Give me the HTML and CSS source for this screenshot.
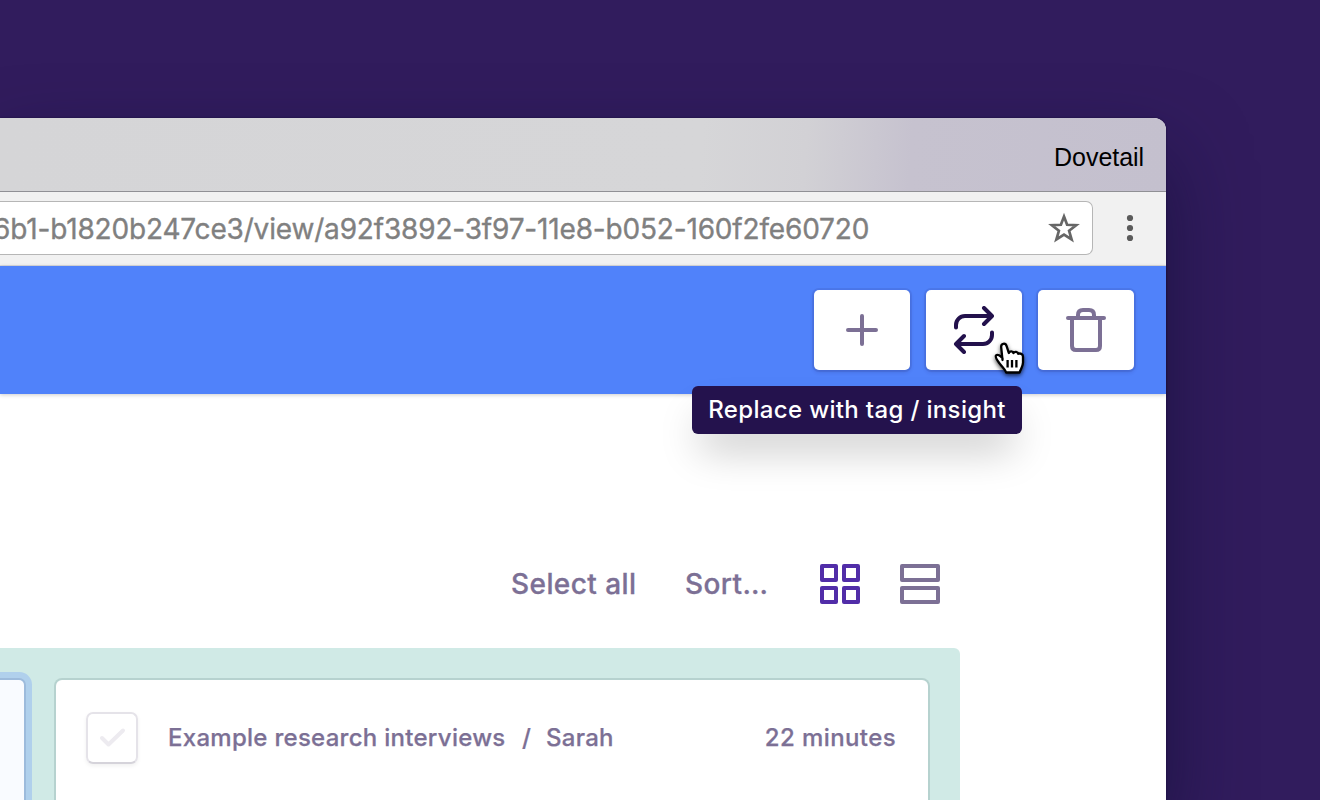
FILE: index.html
```
<!DOCTYPE html>
<html lang="en">
<head>
<meta charset="utf-8">
<title>Dovetail</title>
<link rel="stylesheet" href="styles.css">
</head>
<body>
<main class="window">
  <header class="titlebar"><span class="profile">Dovetail</span></header>
  <div class="toolbar">
    <div class="address">
      <span class="url">6b1-b1820b247ce3/view/a92f3892-3f97-11e8-b052-160f2fe60720</span>
      <svg class="star" viewBox="0 0 32 32"><path d="M16 4.6 19.1 12.8 28.2 13.2 21.1 18.8 23.6 27.4 16 22.5 8.4 27.4 10.9 18.8 3.8 13.2 12.9 12.8Z"/></svg>
    </div>
    <svg class="menu" viewBox="0 0 10 30"><circle cx="5" cy="5" r="3.1"/><circle cx="5" cy="15" r="3.1"/><circle cx="5" cy="25" r="3.1"/></svg>
  </div>
  <nav class="actions">
    <button class="action" aria-label="Add"><svg class="icon" viewBox="0 0 48 48"><path d="M24 10v28M10 24h28"/></svg></button>
    <button class="action active" aria-label="Replace">
      <svg class="icon" viewBox="0 0 48 48"><path d="M6 21.5V19a9 9 0 0 1 9-9h26M34 2l8 8-8 8M42 26.5V29a9 9 0 0 1-9 9H7M14 30l-8 8 8 8"/></svg>
      <svg class="cursor" viewBox="0 0 36 40"><path d="M9.5 22 8.2 9.3C7.8 5.2 12.5 4.3 13.7 8.3L15.8 15C16.8 12.7 20 12.9 20.4 15 21.7 13.1 24.7 13.5 25.2 15.8 27.7 14.8 30 16.4 30 18.8V24.5C30 28 28.2 30 26.5 34.5H13.2C11.9 31 9.2 29 6.7 25.6 4.5 22.5 1.7 19.1 3 17.5 4.6 15.7 7.3 18 9.5 20.3Z"/><path class="lines" d="M14.6 22v7.4M19 22v7.4M23.4 22v7.4"/></svg>
      <span class="tooltip">Replace with tag / insight</span>
    </button>
    <button class="action" aria-label="Delete"><svg class="icon" viewBox="0 0 48 48"><path d="M6 12h36M10 12v28q0 4 4 4h20q4 0 4-4V12M16 12V9q0-5 5-5h6q5 0 5 5v3"/></svg></button>
  </nav>
  <section class="content">
    <div class="controls">
      <span class="select">Select all</span>
      <span class="sort">Sort…</span>
      <svg class="view grid" viewBox="0 0 40 40"><path d="M2 2h14v14H2zM24 2h14v14H24zM2 24h14v14H2zM24 24h14v14H24z"/></svg>
      <svg class="view" viewBox="0 0 40 40"><path d="M2 2h36v14H2zM2 24h36v14H2z"/></svg>
    </div>
    <div class="board">
      <article class="card selected"></article>
      <article class="card">
        <span class="check"><svg viewBox="0 0 48 48"><path d="M14 24l6.5 6.5L35 16.5"/></svg></span>
        <span class="source">Example research interviews</span>
        <span class="slash">/</span>
        <span class="person">Sarah</span>
        <span class="time">22 minutes</span>
      </article>
    </div>
  </section>
</main>
</body>
</html>
```
FILE: styles.css
```
* { box-sizing: border-box; }
body {
  margin: 0;
  height: 800px;
  padding-top: 118px;
  overflow: hidden;
  background: #311c5d;
  font-family: Inter, "Liberation Sans", sans-serif;
  font-weight: 500;
  color: #7c7095;
}
svg { display: block; flex: none; }
span { white-space: nowrap; }
.window {
  width: 1166px;
  height: 682px;
  background: #fff;
  border-radius: 0 12px 0 0;
  box-shadow: 0 0 2px rgba(15, 5, 45, .7), 0 40px 80px rgba(15, 14, 50, .6);
}
.titlebar {
  height: 74px;
  border-bottom: 1px solid #909095;
  border-radius: 0 12px 0 0;
  background: linear-gradient(94deg, #d5d5d7 0%, #d6d6d8 60%, #d2d1d5 69%, #c6c2cf 78%, #c4c0ce 100%);
  display: flex;
  justify-content: flex-end;
  padding: 24px 22px 0 0;
}
.profile {
  font: 400 25px/31px "Liberation Sans", Arial, sans-serif;
  letter-spacing: -.05px;
  color: #000;
}
.toolbar {
  height: 74px;
  background: #f1f1f1;
  border-bottom: 1px solid #dadadc;
  display: flex;
  align-items: flex-start;
  padding: 9px 31px 0 0;
}
.address {
  width: 1093px;
  height: 54px;
  margin-right: 32px;
  border: 1px solid #b6b6b6;
  border-left: 0;
  border-radius: 0 7px 7px 0;
  background: #fff;
  display: flex;
  align-items: center;
  justify-content: space-between;
  padding-right: 12px;
}
.url {
  margin-left: -7px;
  padding-top: 2px;
  font-size: 28px;
  font-weight: 400;
  line-height: 52px;
  color: #808080;
  letter-spacing: -.17px;
  -webkit-text-stroke: .35px #808080;
}
.star { width: 32px; height: 32px; fill: none; stroke: #666; stroke-width: 2.7; }
.menu { width: 10px; height: 30px; margin-top: 12px; fill: #5b5b5b; }
.actions {
  height: 128px;
  background: #5082fa;
  display: flex;
  justify-content: flex-end;
  gap: 16px;
  padding: 24px 32px 0 0;
  box-shadow: 0 1px 4px rgba(0, 0, 0, .2);
  position: relative;
}
.action {
  position: relative;
  width: 96px;
  height: 80px;
  padding: 0;
  border: 0;
  border-radius: 5px;
  background: #fff;
  box-shadow: 0 0 0 2px rgba(40, 35, 110, .1), 0 2px 4px rgba(30, 25, 90, .2);
  display: grid;
  place-items: center;
  font: inherit;
}
.icon {
  width: 48px;
  height: 48px;
  fill: none;
  stroke: #7c7095;
  stroke-width: 4;
  stroke-linecap: round;
  stroke-linejoin: round;
}
.active .icon { stroke: #23114c; }
.cursor {
  position: absolute;
  z-index: 2;
  left: 67px;
  top: 48px;
  width: 36px;
  height: 40px;
  fill: #fff;
  stroke: #000;
  stroke-width: 2.3;
  stroke-linejoin: round;
  filter: drop-shadow(0 2px 2px rgba(0, 0, 0, .65));
}
.lines { fill: none; }
.tooltip {
  position: absolute;
  top: 96px;
  right: 0;
  width: 330px;
  height: 48px;
  border-radius: 6px;
  background: #24124d;
  box-shadow: 0 24px 40px -8px rgba(0, 0, 0, .22);
  color: #fff;
  font-size: 24px;
  line-height: 48px;
  letter-spacing: .35px;
}
.content { padding-top: 160px; }
.controls {
  height: 60px;
  width: 940px;
  display: flex;
  align-items: center;
  justify-content: flex-end;
  font-size: 28px;
  letter-spacing: .42px;
  -webkit-text-stroke: .3px #7c7095;
}
.select { width: 174px; }
.sort { width: 135px; }
.view { width: 40px; height: 40px; fill: none; stroke: #7c7095; stroke-width: 4; stroke-linejoin: round; }
.grid { margin-right: 40px; stroke: #512da8; }
.board {
  width: 960px;
  height: 152px;
  margin-top: 34px;
  padding-top: 32px;
  overflow: hidden;
  border-radius: 0 6px 0 0;
  background: #d0eae6;
  display: flex;
  gap: 32px;
}
.card {
  width: 872px;
  height: 130px;
  border-radius: 6px 6px 0 0;
  background: #fff;
  box-shadow: 0 0 0 2px #b6d2cf;
  padding: 32px 32px 0 30px;
  display: flex;
  align-items: flex-start;
  font-size: 24px;
  line-height: 52px;
  letter-spacing: .28px;
  -webkit-text-stroke: .25px #7c7095;
}
.selected {
  width: 24px;
  padding: 0;
  border-radius: 0 5px 0 0;
  background: #f9fbff;
  box-shadow: 0 0 0 2px #9dbbdc, 0 0 0 8px #b0d0ec;
}
.check {
  width: 52px;
  height: 52px;
  margin-right: 30px;
  border: 2px solid #e5e3e9;
  border-bottom-color: #d5d3da;
  border-radius: 7px;
  box-shadow: 0 2px 4px rgba(0, 0, 0, .06);
}
.check svg { width: 48px; height: 48px; fill: none; stroke: #edebf0; stroke-width: 4; stroke-linecap: round; stroke-linejoin: round; }
.source { width: 354px; }
.slash { width: 24px; }
.time { margin-left: auto; letter-spacing: .4px; }
```
